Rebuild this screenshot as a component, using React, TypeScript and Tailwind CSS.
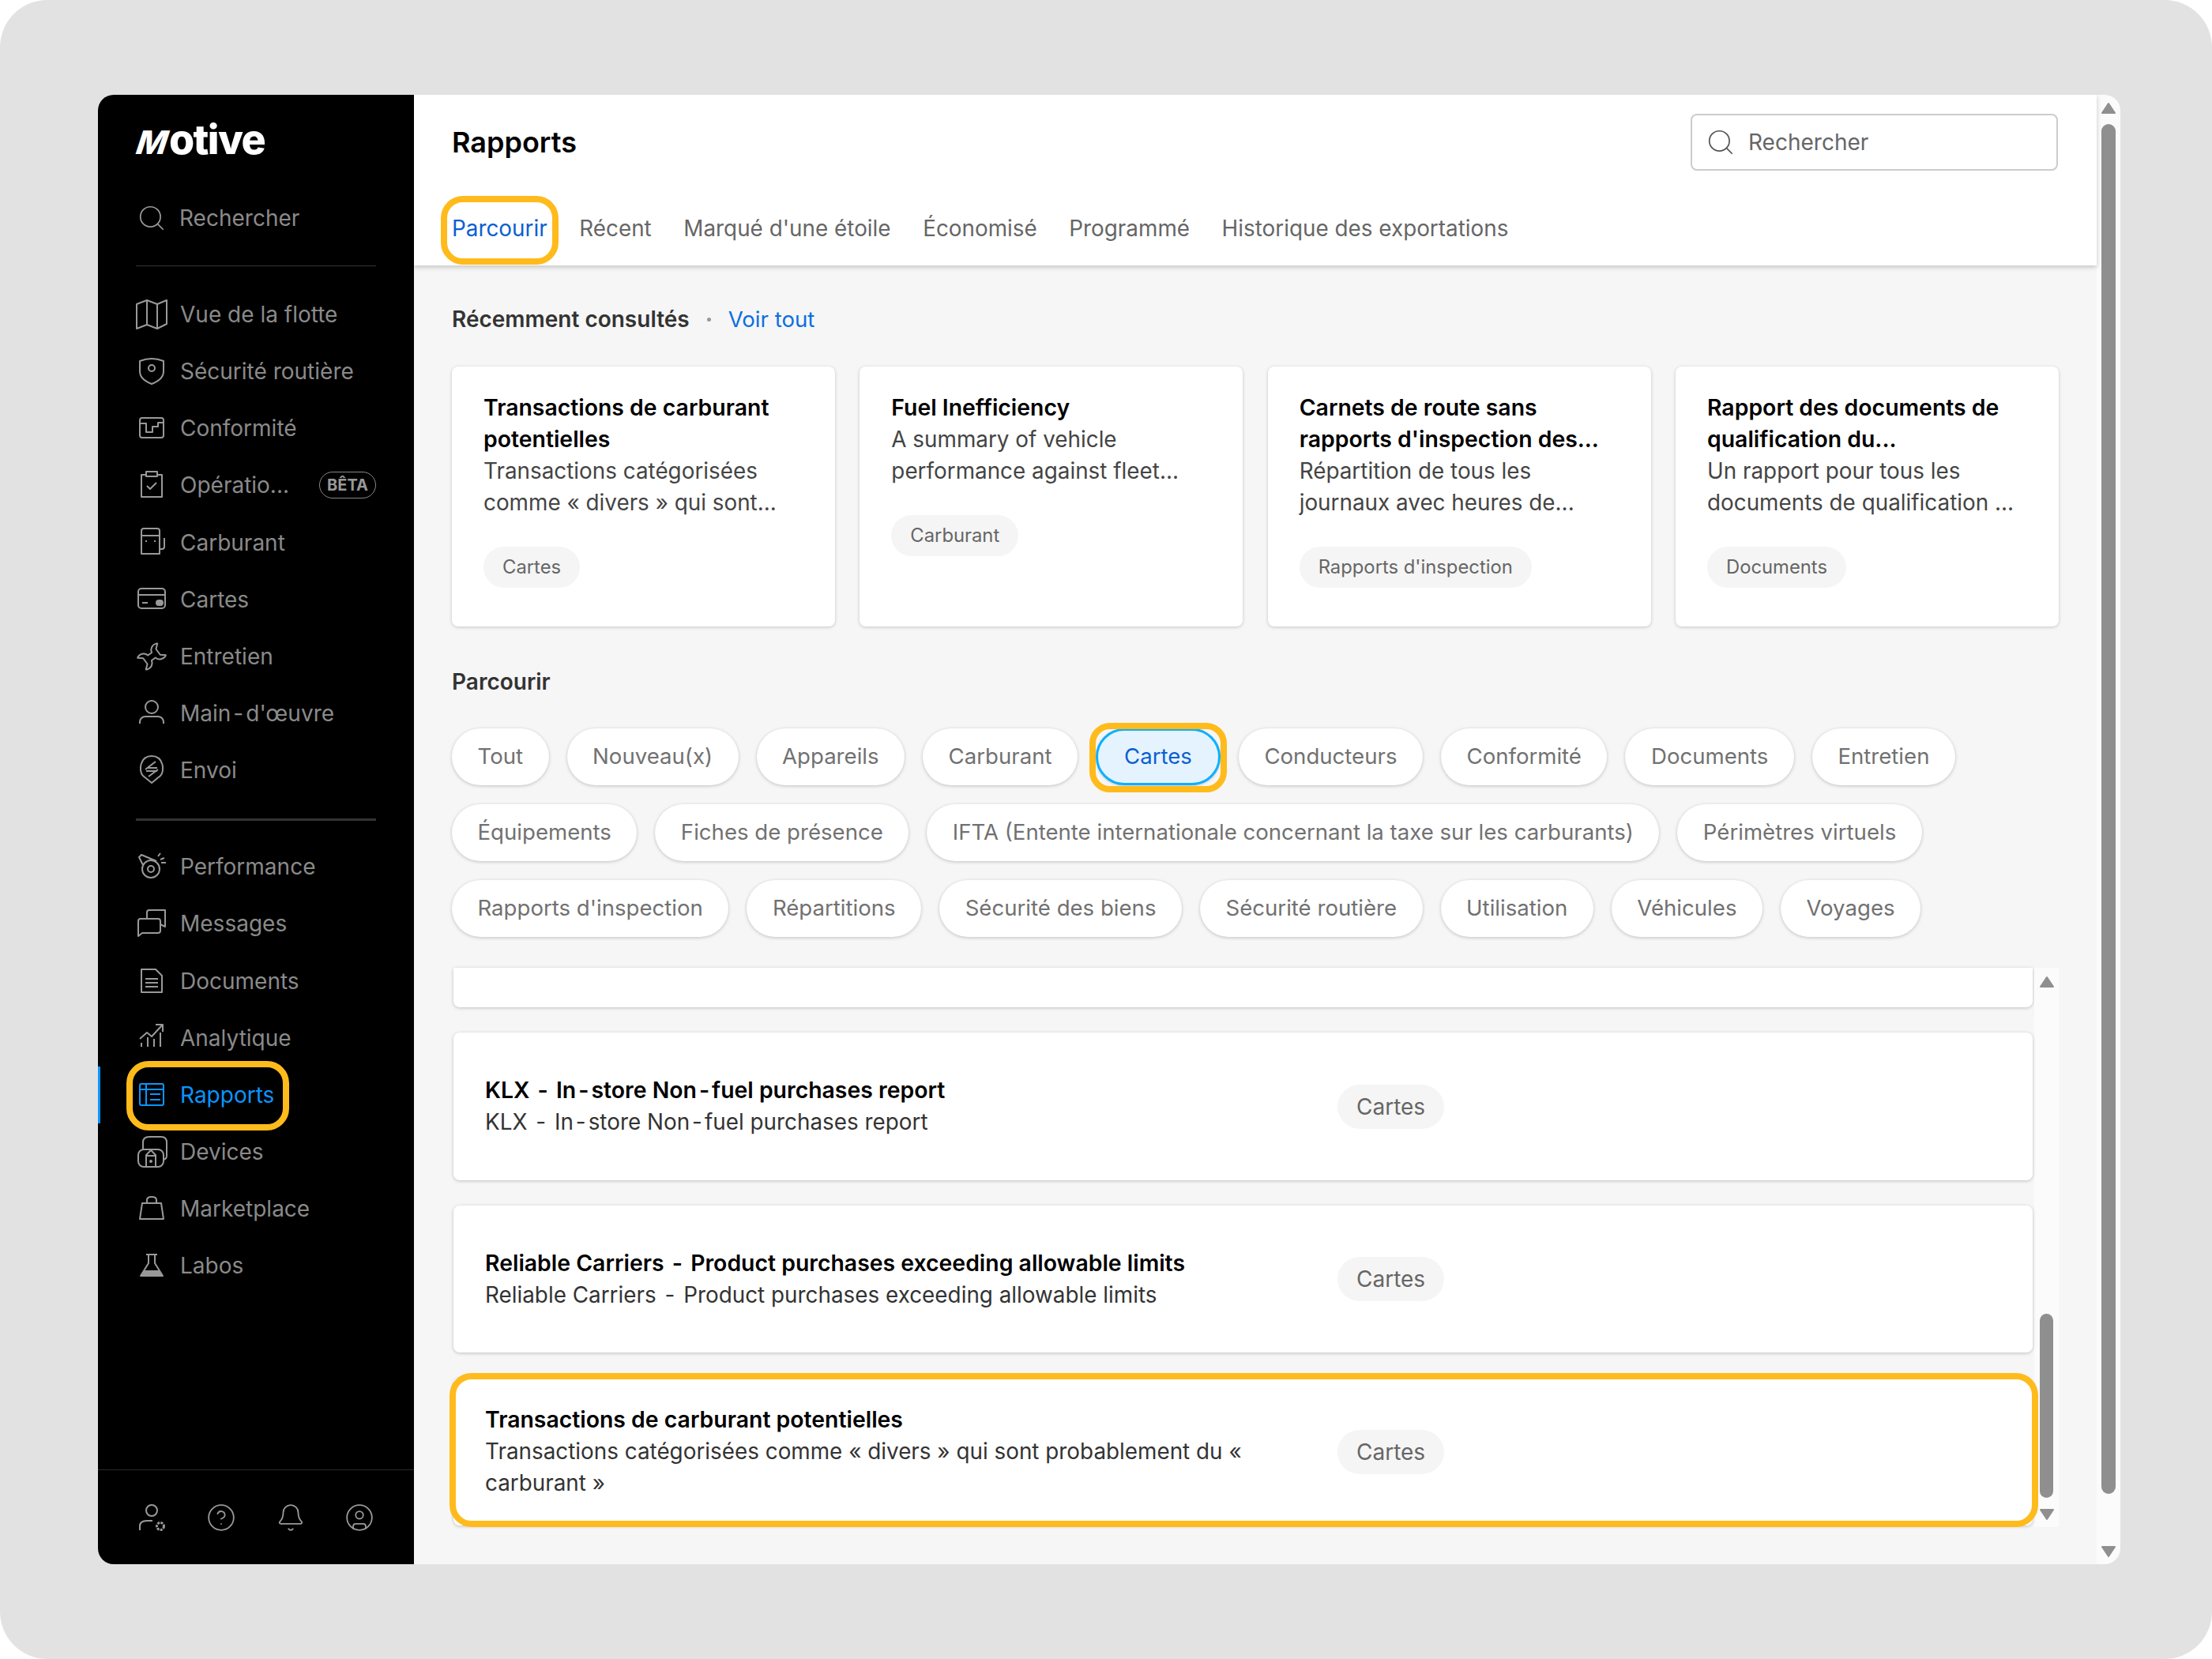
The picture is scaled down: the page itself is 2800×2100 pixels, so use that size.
import { ReactNode } from "react";
import { Bell, CircleHelp, CircleUser, Search } from "lucide-react";

const Ico = ({ children, className = "text-[#999]" }: { children: ReactNode; className?: string }) => (
  <svg viewBox="0 0 40 40" className={`h-[40px] w-[40px] shrink-0 ${className}`} fill="none" stroke="currentColor" strokeWidth="2" strokeLinejoin="round">
    {children}
  </svg>
);

// the source font draws its hyphens with wide side bearings
const Hy = ({ text }: { text: string }) => (
  <>
    {text.split("-").map((part, i) => (
      <span key={i}>
        {i > 0 && <span className="mx-[3px]">-</span>}
        {part}
      </span>
    ))}
  </>
);

const navTop: { label: string; icon: ReactNode; beta?: boolean }[] = [
  { label: "Vue de la flotte", icon: <><path d="M1 7L14 2L27 7L39 2V32L27 38L14 33L1 38Z" /><path d="M14 2V33M27 7V38" /></> },
  { label: "Sécurité routière", icon: <><path d="M5 7Q20 1 35 7V20C35 29 27 33 20 36C13 33 5 29 5 20Z" /><circle cx="20" cy="16" r="4" /></> },
  { label: "Conformité", icon: <><rect x="5" y="7" width="30" height="25" rx="3" /><path d="M5 14H13V25H21V18H28V13H35" /></> },
  { label: "Opératio...", beta: true, icon: <><path d="M13 7H7V35H33V7H27" /><rect x="13" y="3" width="14" height="6" /><path d="M14 21L18 25L26 17" /></> },
  { label: "Carburant", icon: <><path d="M7 34V5C7 3 8 2 10 2H27C29 2 30 3 30 5V34Z" /><path d="M7 11H30M30 28H33C35 28 36 27 36 25V14" /><path d="M12 18H14M23 18H25" /></> },
  { label: "Cartes", icon: <><rect x="3" y="6" width="34" height="25" rx="4" /><path d="M3 14H37M8 24H15" /><rect x="26" y="21" width="8" height="6" rx="3" fill="currentColor" /></> },
  { label: "Entretien", icon: <path transform="translate(20 20) rotate(-36)" d="M-3 -4H3C4 -9 9 -11.5 14 -10L15.5 -9L10 -4.5V4.5L15.5 9L14 10C9 11.5 4 9 3 4H-3C-4 9 -9 11.5 -14 10L-15.5 9L-10 4.5V-4.5L-15.5 -9L-14 -10C-9 -11.5 -4 -9 -3 -4Z" /> },
  { label: "Main-d'œuvre", icon: <><circle cx="20" cy="12" r="8" /><path d="M5 33V31C5 27 8 24 12 24H28C32 24 35 27 35 31V33" /></> },
  { label: "Envoi", icon: <><path d="M20 36L9 27C3 21 5 2 20 2C35 2 37 21 31 27Z" /><path d="M12 19L25 9M27 17H14M28 19L16 28M13 21H27" /></> },
];

const navBottom: { label: string; icon: ReactNode; active?: boolean }[] = [
  { label: "Performance", icon: <><circle cx="19" cy="23" r="11" /><circle cx="19" cy="23" r="4" /><path d="M9 18L4 8L7 5L26 13M28 7L31 3M31 11L36 9M32 15H38" /></> },
  { label: "Messages", icon: <><path d="M14 14V6C14 4 15 3 17 3H37V24L31 21" /><path d="M3 17C3 15 4 14 6 14H28C30 14 31 15 31 17V29C31 31 30 32 28 32H8L3 36Z" /></> },
  { label: "Documents", icon: <path d="M7 5H25L33 13V34H7ZM12 17H28M12 22H28M12 27H28" /> },
  { label: "Analytique", icon: <path d="M5 21L14 13L20 18L33 4M25 3H34V12M7 31V26M15 31V19M23 31V21M31 31V13" /> },
  { label: "Rapports", active: true, icon: <path d="M7 6H33C34 6 35 7 35 8V31C35 32 34 33 33 33H7C6 33 5 32 5 31V8C5 7 6 6 7 6ZM5 13H35M13 6V33M18 19H31M18 26H31" /> },
  { label: "Devices", icon: <><rect x="3" y="17" width="32" height="22" rx="7" /><path d="M9 17V8C9 3 12 1 17 1H32C37 1 39 3 39 8V24C39 28 38 29 35 30" /><path d="M13 39V24L19 18L25 24V39M13 25H25" /><circle cx="19" cy="32" r="1" fill="currentColor" /></> },
  { label: "Marketplace", icon: <path d="M8 13H32L35 33H5ZM14 13V9C14 6 17 5 20 5C23 5 26 6 26 9V13" /> },
  { label: "Labos", icon: <><path d="M13 6H27M16 6V17L6 33H34L24 17V6" /><path d="M11 27H29L32 33H8Z" fill="currentColor" /></> },
];

const recent = [
  { title: "Transactions de carburant potentielles", desc: "Transactions catégorisées comme « divers » qui sont...", tag: "Cartes" },
  { title: "Fuel Inefficiency", desc: "A summary of vehicle performance against fleet...", tag: "Carburant" },
  { title: "Carnets de route sans rapports d'inspection des...", desc: "Répartition de tous les journaux avec heures de...", tag: "Rapports d'inspection" },
  { title: "Rapport des documents de qualification du...", desc: "Un rapport pour tous les documents de qualification ...", tag: "Documents" },
];

const filters = ["Tout", "Nouveau(x)", "Appareils", "Carburant", "Cartes", "Conducteurs", "Conformité", "Documents", "Entretien", "Équipements", "Fiches de présence", "IFTA (Entente internationale concernant la taxe sur les carburants)", "Périmètres virtuels", "Rapports d'inspection", "Répartitions", "Sécurité des biens", "Sécurité routière", "Utilisation", "Véhicules", "Voyages"];

const rows = [
  { title: "KLX - In-store Non-fuel purchases report", desc: "KLX - In-store Non-fuel purchases report" },
  { title: "Reliable Carriers - Product purchases exceeding allowable limits", desc: "Reliable Carriers - Product purchases exceeding allowable limits" },
  { title: "Transactions de carburant potentielles", desc: "Transactions catégorisées comme « divers » qui sont probablement du « carburant »", marked: true },
];

const Highlight = ({ className }: { className: string }) => (
  <span className={`pointer-events-none absolute border-[8px] border-[#ffbb1c] ${className}`} />
);

const Arrow = ({ down = false }: { down?: boolean }) => (
  <svg viewBox="0 0 20 16" className={`h-[16px] w-[20px] shrink-0 ${down ? "rotate-180" : ""}`}>
    <path d="M10 2L18 14H2Z" fill="#8f8f8f" stroke="#8f8f8f" strokeWidth="2" strokeLinejoin="round" />
  </svg>
);

function NavItem({ label, icon, active, beta }: { label: string; icon: ReactNode; active?: boolean; beta?: boolean }) {
  return (
    <div className={`relative flex h-[72.15px] items-center gap-[16px] px-[48px] ${active ? "text-[#0a95ff]" : "text-[#8a8a8a]"}`}>
      {active && <span className="absolute left-0 top-[0px] h-[72px] w-[3px] bg-[#0a95ff]" />}
      <Ico className={active ? "text-[#0a95ff]" : "text-[#999]"}>{icon}</Ico>
      <span className="text-[28px] leading-[40px]"><Hy text={label} /></span>
      {beta && (
        <span className="ml-auto flex h-[34px] w-[72px] items-center justify-center rounded-full border-[1.5px] border-[#888] text-[20px] font-bold text-[#999]">BÊTA</span>
      )}
      {active && <Highlight className="left-[36px] top-[-7px] h-[88px] w-[206px] rounded-[28px]" />}
    </div>
  );
}

function Sidebar() {
  return (
    <aside className="flex w-[400px] shrink-0 flex-col bg-black">
      <div className="flex h-[216px] flex-col px-[48px] pt-[31px]">
        <div className="flex h-[52px] items-baseline text-[52px] font-extrabold leading-[52px] tracking-[-1.6px] text-white">
          <span className="-ml-[3px] inline-block w-[45px] origin-[0_80%] -skew-x-[18deg] text-[41px] leading-[52px]">M</span>
          <span>otive</span>
        </div>
        <div className="mt-[53px] flex h-[40px] items-center gap-[16px] text-[28px] text-[#8a8a8a]">
          <Search size={38} strokeWidth={1.1} className="ml-[1px] text-[#999]" />
          <span>Rechercher</span>
        </div>
      </div>
      <div className="mx-[48px] h-px bg-[#333]" />
      <nav className="mt-[25px]">
        {navTop.map((n) => <NavItem key={n.label} {...n} />)}
      </nav>
      <div className="mx-[48px] mt-[25px] h-[3px] bg-[#333]" />
      <nav className="mt-[22px]">
        {navBottom.map((n) => <NavItem key={n.label} {...n} />)}
      </nav>
      <div className="mt-auto flex h-[120px] items-center justify-between border-t border-[#2a2a2a] pl-[48px] pr-[50px]">
        <Ico>
          <circle cx="20" cy="11" r="7" />
          <path d="M5 36V31C5 26 9 24 14 24H21" />
          <circle cx="31" cy="31" r="4.5" strokeDasharray="3 1.2" strokeWidth="3" />
        </Ico>
        <CircleHelp size={38} strokeWidth={1.15} className="text-[#999]" />
        <Bell size={38} strokeWidth={1.15} className="text-[#999]" />
        <CircleUser size={38} strokeWidth={1.15} className="text-[#999]" />
      </div>
    </aside>
  );
}

function Header() {
  const tabs = ["Récent", "Marqué d'une étoile", "Économisé", "Programmé", "Historique des exportations"];
  return (
    <header className="relative z-10 h-[216px] shrink-0 bg-white pl-[48px] pr-[49px] shadow-[0_2px_6px_rgba(0,0,0,0.22)]">
      <div className="flex items-center justify-between pt-[24px]">
        <h1 className="text-[36px] font-semibold leading-[48px] text-black">Rapports</h1>
        <div className="flex h-[72px] w-[465px] items-center gap-[16px] rounded-[8px] border-2 border-[#ccc] pl-[17px] text-[28px] text-[#666]">
          <Search size={38} strokeWidth={1.1} className="text-[#555]" />
          <span>Rechercher</span>
        </div>
      </div>
      <div className="mt-[53px] flex gap-[40.6px] text-[27.85px] leading-[40px] text-[#666]">
        <span className="relative text-[#0b5fd1]">
          Parcourir
          <Highlight className="left-[-14px] top-[-21px] h-[87px] w-[149px] rounded-[28px]" />
        </span>
        {tabs.map((t) => <span key={t}>{t}</span>)}
      </div>
    </header>
  );
}

function RecentCard({ title, desc, tag }: { title: string; desc: string; tag: string }) {
  return (
    <div className="h-[329px] w-[485px] rounded-[8px] bg-white px-[40px] pt-[32px] shadow-[0_1px_4px_rgba(0,0,0,0.2)]">
      <div className="text-[28.4px] font-semibold leading-[40px] text-black">{title}</div>
      <div className="text-[27.85px] leading-[40px] text-[#444]">{desc}</div>
      <span className="mt-[36px] inline-flex h-[52px] items-center rounded-full bg-[#f5f5f5] px-[24px] text-[23.8px] text-[#666]">{tag}</span>
    </div>
  );
}

function ReportRow({ title, desc, marked }: { title: string; desc: string; marked?: boolean }) {
  return (
    <div className="relative flex h-[186.5px] shrink-0 items-center rounded-[8px] bg-white pl-[40px] shadow-[0_1px_4px_rgba(0,0,0,0.22)]">
      <div className="w-[1079px] pr-[100px]">
        <div className="text-[28.4px] font-semibold leading-[40px] text-black"><Hy text={title} /></div>
        <div className="text-[27.85px] leading-[40px] text-[#333]"><Hy text={desc} /></div>
      </div>
      <span className="mt-[1px] inline-flex h-[56px] items-center rounded-full bg-[#f5f5f5] px-[24px] text-[28px] text-[#666]">Cartes</span>
      {marked && <Highlight className="left-[-5px] top-[-6px] h-[195px] w-[2011px] rounded-[28px]" />}
    </div>
  );
}

function Content() {
  return (
    <div className="flex-1 bg-[#f6f6f6] pl-[48px] pr-[48px] pt-[48px]">
      <div className="flex items-center text-[28px] leading-[40px]">
        <span className="font-semibold text-[#333]">Récemment consultés</span>
        <span className="ml-[22px] mr-[22px] h-[5px] w-[5px] rounded-full bg-[#999]" />
        <span className="text-[27.6px] text-[#0b6fe0]">Voir tout</span>
      </div>
      <div className="mt-[40px] flex justify-between">
        {recent.map((r) => <RecentCard key={r.title} {...r} />)}
      </div>
      <div className="mt-[50px] text-[28px] font-semibold leading-[40px] text-[#333]">Parcourir</div>
      <div className="mt-[39px] flex flex-wrap gap-x-[23px] gap-y-[24px]">
        {filters.map((f) =>
          f === "Cartes" ? (
            <span key={f} className="relative flex h-[72px] items-center rounded-full border-[3px] border-[#0db0ff] bg-[#e5f3ff] px-[33px] text-[27.6px] text-[#0b5fd1] shadow-[0_1px_3px_rgba(0,0,0,0.2)]">
              {f}
              <Highlight className="left-[-11px] top-[-10px] h-[88px] w-[174px] rounded-[26px]" />
            </span>
          ) : (
            <span key={f} className="flex h-[72px] items-center rounded-full bg-white px-[32.5px] text-[27.6px] text-[#717171] shadow-[0_1px_4px_rgba(0,0,0,0.22)]">{f}</span>
          )
        )}
      </div>
      <div className="mt-[39px] flex h-[708px] pl-[2px]">
        <div className="flex w-[2001px] flex-col gap-[32px]">
          <div className="h-[50px] shrink-0 rounded-b-[8px] bg-white shadow-[0_1px_4px_rgba(0,0,0,0.22)]" />
          {rows.map((r) => <ReportRow key={r.title} {...r} />)}
        </div>
        <div className="ml-[2px] flex w-[31px] flex-col items-center bg-[#fbfbfb] pt-[10px]">
          <Arrow />
          <div className="mt-[412px] h-[233px] w-[17px] rounded-full bg-[#8f8f8f]" />
          <div className="mt-[13px]"><Arrow down /></div>
        </div>
      </div>
    </div>
  );
}

export default function App() {
  return (
    <div className="bg-white">
      <div className="h-[2100px] w-[2800px] rounded-[60px] bg-[#e2e2e2] pl-[124px] pt-[120px] font-['Inter',sans-serif]">
        <div className="flex h-[1860px] w-[2560px] overflow-hidden rounded-[20px]">
          <Sidebar />
          <main className="flex w-[2130px] shrink-0 flex-col">
            <Header />
            <Content />
          </main>
          <div className="flex w-[30px] flex-col items-center bg-[#fbfbfb] pt-[9px]">
            <Arrow />
            <div className="mt-[12px] h-[1734px] w-[18px] rounded-full bg-[#8f8f8f]" />
            <div className="mt-[65px]"><Arrow down /></div>
          </div>
        </div>
      </div>
    </div>
  );
}
